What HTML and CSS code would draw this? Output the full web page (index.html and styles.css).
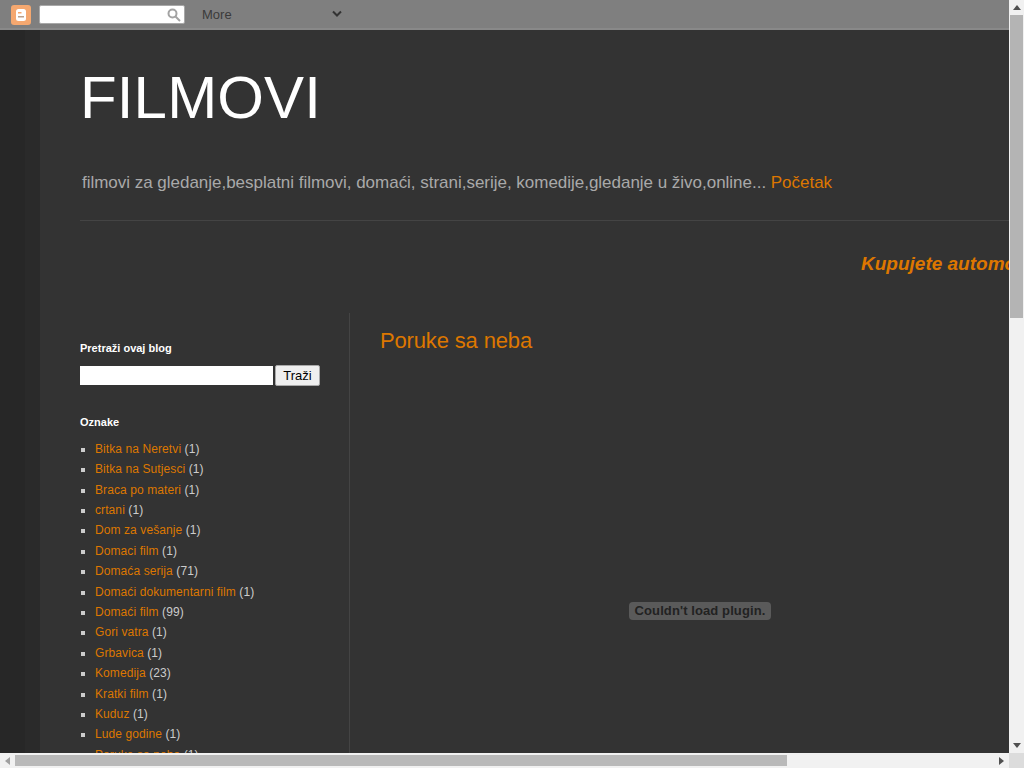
FILE: index.html
```html
<!DOCTYPE html>
<html lang="en">
<head>
  <meta charset="UTF-8">
  <title>FILMOVI: Poruke sa neba</title>
  <link rel="stylesheet" href="styles.css">
</head>
<body>
  <div class="window">
    <div class="viewport">
      <div class="navbar">
        <svg class="blogger-logo" width="20" height="20" viewBox="0 0 20 20">
          <rect width="20" height="20" rx="3" fill="#f5a870"/>
          <rect x="5" y="4" width="10" height="12" rx="2.5" fill="#fff"/>
          <rect x="7" y="7" width="3.5" height="1.5" fill="#f5a870"/>
          <rect x="7" y="11" width="6" height="1.5" fill="#b9a08c"/>
        </svg>
        <div class="nav-search">
          <svg width="14" height="14" viewBox="0 0 14 14" fill="none" stroke="#a3a3a3" stroke-width="2">
            <circle cx="5.5" cy="5.5" r="4"/>
            <path d="M8.5 8.5l4.5 4.5"/>
          </svg>
        </div>
        <span class="nav-more">More</span>
        <svg class="nav-arrow" width="10" height="8" viewBox="0 0 10 8" fill="none" stroke="#333" stroke-width="2">
          <path d="M1 1.5l4 4 4-4"/>
        </svg>
      </div>

      <div class="page">
        <div class="content">
          <div class="header">
            <h1 class="blog-title">FILMOVI</h1>
            <p class="blog-desc">filmovi za gledanje,besplatni filmovi, domaći, strani,serije, komedije,gledanje u živo,online... <a href="#">Početak</a></p>
          </div>
          <div class="marquee"><span>Kupujete automobil</span></div>

          <div class="columns">
            <div class="sidebar">
              <h2 class="widget-title">Pretraži ovaj blog</h2>
              <div class="search-form">
                <input class="search-input" type="text">
                <button class="search-btn">Traži</button>
              </div>
              <h2 class="widget-title labels-title">Oznake</h2>
              <ul class="labels">
                <li><a href="#">Bitka na Neretvi</a> (1)</li>
                <li><a href="#">Bitka na Sutjesci</a> (1)</li>
                <li><a href="#">Braca po materi</a> (1)</li>
                <li><a href="#">crtani</a> (1)</li>
                <li><a href="#">Dom za vešanje</a> (1)</li>
                <li><a href="#">Domaci film</a> (1)</li>
                <li><a href="#">Domaća serija</a> (71)</li>
                <li><a href="#">Domaći dokumentarni film</a> (1)</li>
                <li><a href="#">Domaći film</a> (99)</li>
                <li><a href="#">Gori vatra</a> (1)</li>
                <li><a href="#">Grbavica</a> (1)</li>
                <li><a href="#">Komedija</a> (23)</li>
                <li><a href="#">Kratki film</a> (1)</li>
                <li><a href="#">Kuduz</a> (1)</li>
                <li><a href="#">Lude godine</a> (1)</li>
                <li><a href="#">Poruke sa neba</a> (1)</li>
              </ul>
            </div>
            <div class="main">
              <h3 class="post-title">Poruke sa neba</h3>
              <div class="plugin">
                <span class="plugin-msg">Couldn't load plugin.</span>
              </div>
            </div>
          </div>
        </div>
      </div>
    </div>

    <div class="vbar">
      <div class="arrow-btn"><span class="tri tri-up"></span></div>
      <div class="vbar-track"><div class="vbar-thumb"></div></div>
      <div class="arrow-btn"><span class="tri tri-down"></span></div>
    </div>

    <div class="hbar">
      <div class="arrow-btn"><span class="tri tri-left"></span></div>
      <div class="hbar-track"><div class="hbar-thumb"></div></div>
      <div class="arrow-btn"><span class="tri tri-right"></span></div>
    </div>
    <div class="corner"></div>
  </div>
</body>
</html>
```

FILE: styles.css
```css
html, body {
  margin: 0;
  padding: 0;
  overflow: hidden;
}
body {
  font-family: "Liberation Sans", Arial, sans-serif;
  font-size: 12px;
  color: #cccccc;
}
a {
  color: #dd7700;
  text-decoration: none;
}
.window {
  width: 1024px;
  height: 768px;
  display: grid;
  grid-template-columns: 1009px 15px;
  grid-template-rows: 753px 15px;
}
.viewport {
  overflow: hidden;
  display: flex;
  flex-direction: column;
  background-color: #333333;
}

/* blogger navbar */
.navbar {
  flex: 0 0 30px;
  box-sizing: border-box;
  display: flex;
  align-items: flex-start;
  background-color: #7f7f7f;
  border-bottom: 2px solid #898989;
  padding: 5px 0 0 11px;
}
.blogger-logo {
  flex: none;
}
.nav-search {
  box-sizing: border-box;
  width: 146px;
  height: 19px;
  margin-left: 8px;
  background-color: white;
  border: 1px solid #a8a8a8;
  border-radius: 2px;
  display: flex;
  align-items: center;
  justify-content: flex-end;
  padding-right: 3px;
}
.nav-more {
  margin-left: 17px;
  margin-top: 1px;
  font-size: 13px;
  line-height: 17px;
  color: #3b3b3b;
}
.nav-arrow {
  margin-left: 100px;
  margin-top: 5px;
}

/* page */
.page {
  flex: 1;
  min-height: 0;
  padding-left: 40px;
  background: linear-gradient(to right, #272727 25px, #2a2a2a 25px, #2a2a2a 40px, #333333 40px);
  overflow: hidden;
}
.content {
  width: 1100px;
  padding-left: 40px;
}
.header {
  border-bottom: 1px solid #444444;
  height: 191px;
  box-sizing: border-box;
}
.blog-title {
  margin: 0;
  padding-top: 30px;
  font-size: 60px;
  line-height: 76px;
  font-weight: normal;
  letter-spacing: 0.15px;
  color: white;
}
.blog-desc {
  margin: 0;
  padding: 37px 0 0 2px;
  font-size: 17px;
  line-height: 20px;
  letter-spacing: -0.02px;
  color: #a9a9a9;
}
.marquee {
  height: 92px;
  padding: 32px 0 0 781px;
  box-sizing: border-box;
  font-size: 19px;
  line-height: 22px;
  font-weight: bold;
  font-style: italic;
  color: #dd7700;
  white-space: nowrap;
}
.columns {
  display: flex;
}
.sidebar {
  box-sizing: border-box;
  width: 270px;
  padding-top: 29px;
  border-right: 1px solid #444444;
  height: 600px;
}
.widget-title {
  margin: 0;
  font-size: 11px;
  line-height: 13px;
  color: white;
}
.search-form {
  display: flex;
  align-items: center;
  margin-top: 10px;
  width: 240px;
}
.search-input {
  box-sizing: border-box;
  width: 193px;
  height: 19px;
  border: 0;
  margin: 0;
  padding: 0;
  background-color: white;
}
.search-btn {
  box-sizing: border-box;
  width: 45px;
  height: 21px;
  margin-left: 2px;
  padding: 0;
  font-family: "Liberation Sans", Arial, sans-serif;
  font-size: 13px;
  color: black;
  background-color: #efefef;
  border: 1px solid #a9a9a9;
  border-radius: 2px;
}
.labels-title {
  margin-top: 30px;
}
.labels {
  margin: 9.8px 0 0;
  padding: 0 0 0 15px;
  list-style: square;
}
.labels li {
  line-height: 14.4px;
  padding: 3px 0;
  letter-spacing: 0.09px;
}
.main {
  flex: 1;
  padding: 14px 0 0 30px;
}
.post-title {
  margin: 0;
  font-size: 22px;
  line-height: 28px;
  font-weight: normal;
  letter-spacing: -0.15px;
  color: #dd7700;
}
.plugin {
  width: 640px;
  height: 512px;
  display: flex;
  align-items: center;
  justify-content: center;
}
.plugin-msg {
  padding: 1px 6px;
  font-size: 13px;
  line-height: 16px;
  font-weight: bold;
  letter-spacing: 0.1px;
  color: #222222;
  background-color: #5a5a5a;
  border-radius: 4px;
}

/* scrollbars */
.vbar, .hbar {
  display: flex;
  background-color: #f1f1f1;
}
.vbar {
  flex-direction: column;
}
.arrow-btn {
  flex: 0 0 15px;
  height: 15px;
  display: flex;
  align-items: center;
  justify-content: center;
}
.vbar-track, .hbar-track {
  flex: 1;
  min-width: 0;
  min-height: 0;
}
.vbar-thumb {
  height: 303px;
  margin: 0 1px;
  background-color: #b4b4b4;
}
.hbar-thumb {
  width: 772px;
  height: 11px;
  margin-top: 2px;
  background-color: #b9b9b9;
}
.tri {
  width: 0;
  height: 0;
  border: 4px solid transparent;
}
.tri-up { border-top: 0; border-bottom: 5px solid #505050; }
.tri-down { border-bottom: 0; border-top: 5px solid #505050; }
.tri-left { border-left: 0; border-right: 5px solid #a0a0a0; }
.tri-right { border-right: 0; border-left: 5px solid #505050; }
.corner {
  background-color: #dcdcdc;
}
```
